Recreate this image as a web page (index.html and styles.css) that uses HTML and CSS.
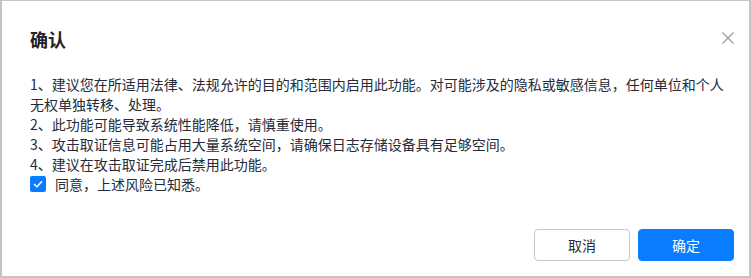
FILE: index.html
```html
<!DOCTYPE html>
<html lang="zh">
<head>
<meta charset="utf-8">
<link rel="stylesheet" href="styles.css">
</head>
<body>
<div class="dialog">
  <div class="header">
    <div class="title">确认</div>
    <span class="close" aria-label="close">
      <svg width="12" height="12" viewBox="0 0 12 12"><path d="M0.5 0.5 L11.5 11.5 M11.5 0.5 L0.5 11.5" stroke="#9a9a9a" stroke-width="1.1" fill="none"/></svg>
    </span>
  </div>
  <div class="body">
    <p>1、建议您在所适用法律、法规允许的目的和范围内启用此功能。对可能涉及的隐私或敏感信息，任何单位和个人无权单独转移、处理。</p>
    <p>2、此功能可能导致系统性能降低，请慎重使用。</p>
    <p>3、攻击取证信息可能占用大量系统空间，请确保日志存储设备具有足够空间。</p>
    <p>4、建议在攻击取证完成后禁用此功能。</p>
    <label class="agree">
      <span class="box"><svg width="10" height="8" viewBox="0 0 10 8"><path d="M1 4 L4 6.8 L9 1.2" stroke="#fff" stroke-width="1.5" fill="none"/></svg></span>
      <span>同意，上述风险已知悉。</span>
    </label>
  </div>
  <div class="footer">
    <button class="btn cancel">取消</button>
    <button class="btn primary">确定</button>
  </div>
</div>
</body>
</html>
```
FILE: styles.css
```css
html, body {
  margin: 0;
  padding: 0;
  background: #fff;
}
body {
  font-family: "Noto Sans CJK SC", "Noto Sans", sans-serif;
  color: #252b3a;
}
.dialog {
  width: 751px;
  height: 278px;
  box-sizing: border-box;
  border: 2px solid #c4c4c4;
  border-top-width: 1px;
  background: #fff;
  display: flex;
  flex-direction: column;
  padding: 0 15px 0 28px;
}
.header {
  display: flex;
  justify-content: space-between;
  align-items: center;
  padding-top: 24px;
  height: 28px;
  box-sizing: content-box;
}
.title {
  font-size: 18px;
  font-weight: bold;
  line-height: 28px;
  color: #1f2329;
}
.close {
  display: flex;
  margin-right: 0;
  margin-top: -3px;
}
.body {
  margin-top: 21px;
  font-size: 14px;
  line-height: 20px;
}
.body p {
  margin: 0;
}
.agree {
  display: flex;
  align-items: center;
  height: 20px;
}
.box {
  width: 16px;
  height: 16px;
  border-radius: 2px;
  background: #0a7cff;
  display: flex;
  align-items: center;
  justify-content: center;
  margin-right: 9px;
}
.footer {
  margin-top: 35px;
  display: flex;
  justify-content: flex-end;
  gap: 8px;
}
.btn {
  width: 96px;
  height: 32px;
  border-radius: 4px;
  font-family: "Noto Sans CJK SC", "Noto Sans", sans-serif;
  font-size: 14px;
  padding: 0;
  cursor: pointer;
}
.cancel {
  background: #fff;
  border: 1px solid #c7c7c7;
  color: #252b3a;
}
.primary {
  background: #0a7cff;
  border: 1px solid #0a7cff;
  color: #fff;
}
```
